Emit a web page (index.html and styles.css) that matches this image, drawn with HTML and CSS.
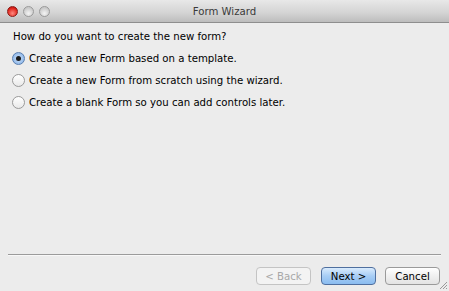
FILE: index.html
```html
<html>
<head>
<title>Form Wizard</title>
<link rel="stylesheet" href="styles.css">
</head>
<body>
<div class="window">
  <div class="titlebar">
    <div class="lights">
      <span class="light close"></span>
      <span class="light"></span>
      <span class="light"></span>
    </div>
    <div class="title">Form Wizard</div>
  </div>
  <div class="content">
    <p class="question">How do you want to create the new form?</p>
    <label class="option"><span class="radio checked"></span>Create a new Form based on a template.</label>
    <label class="option"><span class="radio"></span>Create a new Form from scratch using the wizard.</label>
    <label class="option"><span class="radio"></span>Create a blank Form so you can add controls later.</label>
  </div>
  <div class="footer">
    <hr class="sep">
    <div class="buttons">
      <button class="btn" disabled>&lt; Back</button>
      <button class="btn default">Next &gt;</button>
      <button class="btn">Cancel</button>
    </div>
    <svg class="grip" width="10" height="10" viewBox="0 0 10 10">
      <path d="M9 2 L2 9 M9 5 L5 9 M9 8 L8 9" stroke="#9a9a9a" stroke-width="1"/>
    </svg>
  </div>
</div>
</body>
</html>
```
FILE: styles.css
```css
body {
  margin: 0;
  background: #ececec;
  font-family: "DejaVu Sans Condensed", "DejaVu Sans", sans-serif;
  font-size: 11.3px;
  color: #000;
}
.window {
  width: 449px;
  height: 291px;
  display: flex;
  flex-direction: column;
  position: relative;
}
.titlebar {
  height: 22px;
  background: linear-gradient(#e8e8e8, #d3d3d3 60%, #bdbdbd);
  border-bottom: 1px solid #8e8e8e;
  position: relative;
  display: flex;
  align-items: center;
}
.lights {
  display: flex;
  gap: 4px;
  padding-left: 7px;
}
.light {
  width: 11px;
  height: 11px;
  border-radius: 50%;
  background: radial-gradient(circle at 50% 70%, #f4f4f4, #c9c9c9 70%);
  border: 1px solid #9a9a9a;
  box-sizing: border-box;
  margin-right: 1px;
}
.light.close {
  background: radial-gradient(circle at 50% 70%, #ff8a80, #e0251c 65%, #a10d0b);
  border-color: #8c1b16;
}
.title {
  position: absolute;
  left: 0;
  right: 0;
  text-align: center;
  font-size: 11.3px;
  color: #3a3a3a;
}
.content {
  flex: 1;
  padding: 3px 12px 0;
}
.question {
  margin: 0 0 0 1px;
  line-height: 21px;
}
.option {
  display: flex;
  align-items: center;
  height: 22px;
}
.radio {
  width: 13px;
  height: 13px;
  border-radius: 50%;
  border: 1px solid #9a9a9a;
  box-sizing: border-box;
  background: linear-gradient(#ffffff, #e9e9e9);
  margin-right: 4px;
  display: flex;
  align-items: center;
  justify-content: center;
}
.radio.checked {
  border-color: #5a7fb0;
  background: radial-gradient(circle, #cfe3fb, #8db6e8 80%);
}
.radio.checked::after {
  content: "";
  width: 5px;
  height: 5px;
  border-radius: 50%;
  background: #1a1a1a;
}
.footer {
  position: relative;
  height: 37px;
}
.sep {
  margin: 0 8px;
  border: 0;
  border-top: 1px solid #9b9b9b;
  border-bottom: 1px solid #f8f8f8;
  height: 0;
}
.buttons {
  display: flex;
  justify-content: flex-end;
  gap: 10px;
  padding: 11px 9px 0;
}
.btn {
  font-family: "DejaVu Sans Condensed", "DejaVu Sans", sans-serif;
  font-size: 11.3px;
  height: 18px;
  padding: 0;
  width: 55px;
  border: 1px solid #9a9a9a;
  border-radius: 4px;
  background: linear-gradient(#ffffff, #f0f0f0 50%, #e3e3e3);
  color: #000;
}
.btn + .btn + .btn {
  margin-left: -1px;
}
.btn[disabled] {
  color: #a8a8a8;
  border-color: #c4c4c4;
  background: #f3f3f3;
}
.btn.default {
  border-color: #4f6f9f;
  background: linear-gradient(#d9ebfd, #a7cdf5 50%, #8abcf0);
}
.grip {
  position: absolute;
  right: 1px;
  bottom: 1px;
}
```
